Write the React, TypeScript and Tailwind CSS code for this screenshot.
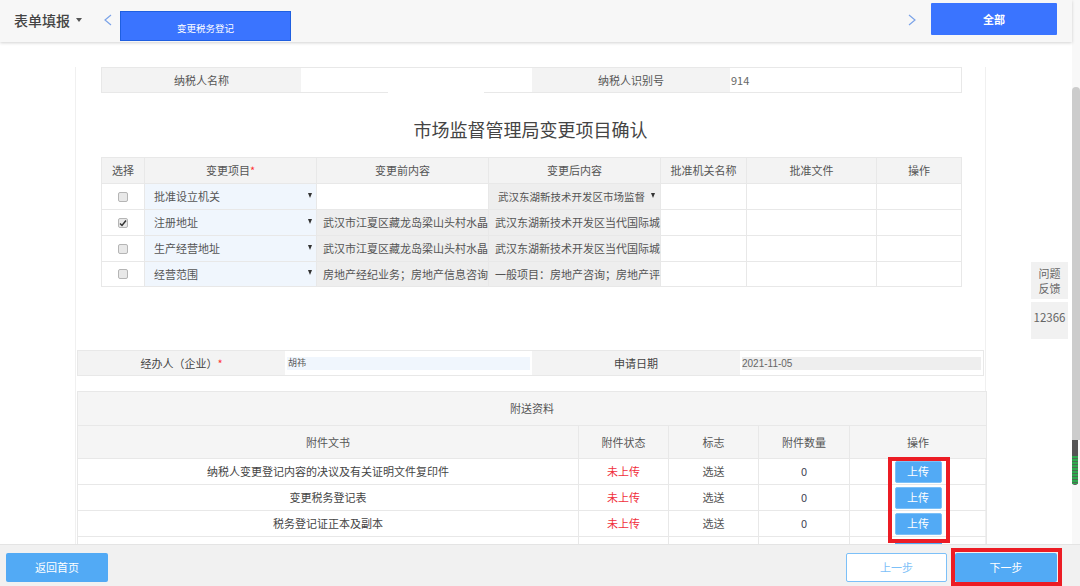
const changeRows = [
  { item: "批准设立机关", before: "", after: "武汉东湖新技术开发区市场监督", checked: false, editable: true },
  { item: "注册地址", before: "武汉市江夏区藏龙岛梁山头村水晶", after: "武汉东湖新技术开发区当代国际城", checked: true, editable: false },
  { item: "生产经营地址", before: "武汉市江夏区藏龙岛梁山头村水晶", after: "武汉东湖新技术开发区当代国际城", checked: false, editable: false },
  { item: "经营范围", before: "房地产经纪业务；房地产信息咨询", after: "一般项目：房地产咨询；房地产评", checked: false, editable: false },
];

const attachments = [
  "纳税人变更登记内容的决议及有关证明文件复印件",
  "变更税务登记表",
  "税务登记证正本及副本",
];

const th = "border border-[#e8e8e8] bg-[#f3f3f3] text-center font-normal text-[#555]";
const attachTh = "border border-[#e8e8e8] bg-[#f5f5f5] text-center font-normal text-[#555]";
const td = "border border-[#e8e8e8] text-center";

function Chevron({ right = false }: { right?: boolean }) {
  return (
    <svg width="8" height="12" viewBox="0 0 8 12" fill="none" stroke="#7ba3e8" strokeWidth="1.2">
      <path d={right ? "M1 1l6 5-6 5" : "M7 1L1 6l6 5"} />
    </svg>
  );
}

function Arrow() {
  return (
    <span className="-mt-[3px] h-0 w-0 shrink-0 border-x-[2.5px] border-t-[5px] border-x-transparent border-t-[#333]" />
  );
}

function Checkbox({ checked }: { checked: boolean }) {
  return (
    <span className="mx-auto flex h-[10px] w-[10px] items-center justify-center rounded-[2px] border border-[#b5b5b5] bg-[#e8e8e8]">
      {checked && (
        <svg width="8" height="8" viewBox="0 0 8 8" fill="none" stroke="#333" strokeWidth="1.5">
          <path d="M1 4.5l2 2 4-5" />
        </svg>
      )}
    </span>
  );
}

export default function App() {
  return (
    <div className="relative flex h-[586px] w-[1080px] flex-col overflow-hidden bg-white font-['Noto_Sans_CJK_SC','Liberation_Sans',sans-serif] text-[11px] text-[#555]">
      <div className="flex min-h-0 flex-1">
        <div className="flex min-w-0 flex-1 flex-col">
          <header className="relative z-10 flex h-[42px] shrink-0 items-center bg-[#f7f7f7] pr-[15px] pl-[14px] shadow-[0_1px_3px_rgba(0,0,0,0.18)]">
            <span className="-mt-[2px] text-[14px] font-medium text-[#444]">表单填报</span>
            <span className="-mt-[2px] ml-[6px] h-0 w-0 border-x-[3.5px] border-t-[4px] border-x-transparent border-t-[#555]" />
            <span className="-mt-[2px] mr-[8px] ml-[22px] flex">
              <Chevron />
            </span>
            <button className="mt-[11px] mb-px h-[30px] w-[171px] self-start border border-[#1f5fe0] bg-[#3a74ff] pt-[4px] text-[9.5px] text-white">
              变更税务登记
            </button>
            <span className="flex-1" />
            <span className="-mt-[2px] mr-[15px] flex">
              <Chevron right />
            </span>
            <button className="mt-[3px] h-[32px] w-[126px] self-start rounded-[1px] bg-[#3a74ff] text-[11px] font-bold text-white">
              全部
            </button>
          </header>

          <main className="min-h-0 flex-1 overflow-hidden">
            <div className="ml-[75px] h-full w-[911px] border-x border-[#f0f0f0] px-px">
              <div className="mx-[24px] mt-[25px] flex h-[26px] w-[861px] border border-[#e8e8e8]">
                <div className="flex w-[199px] items-center justify-center bg-[#f3f3f3]">纳税人名称</div>
                <div className="relative w-[231px]">
                  <span className="absolute -bottom-px left-[87px] h-[2px] w-[96px] bg-white" />
                </div>
                <div className="flex w-[198px] items-center justify-center bg-[#f3f3f3]">纳税人识别号</div>
                <div className="flex flex-1 items-center pl-px text-[#666]">914</div>
              </div>

              <h1 className="mt-[23px] h-[26px] text-center text-[18px] leading-[26px] font-normal text-[#444]">
                市场监督管理局变更项目确认
              </h1>

              <table className="mx-[24px] mt-[15px] w-[860px] table-fixed border-collapse">
                <colgroup>
                  <col className="w-[43px]" />
                  <col className="w-[172px]" />
                  <col className="w-[172px]" />
                  <col className="w-[172px]" />
                  <col className="w-[86px]" />
                  <col className="w-[130px]" />
                  <col className="w-[85px]" />
                </colgroup>
                <thead>
                  <tr className="h-[26px]">
                    <th className={th}>选择</th>
                    <th className={th}>
                      变更项目<span className="text-[#f33]">*</span>
                    </th>
                    <th className={th}>变更前内容</th>
                    <th className={th}>变更后内容</th>
                    <th className={th}>批准机关名称</th>
                    <th className={th}>批准文件</th>
                    <th className={th}>操作</th>
                  </tr>
                </thead>
                <tbody>
                  {changeRows.map((row, i) => (
                    <tr key={row.item} className={i === 3 ? "h-[25px]" : "h-[26px]"}>
                      <td className={td}>
                        <Checkbox checked={row.checked} />
                      </td>
                      <td className="border border-[#e8e8e8] bg-[#f0f6fd] pr-[4px] pl-[9px]">
                        <div className="flex items-center justify-between">
                          <span>{row.item}</span>
                          <Arrow />
                        </div>
                      </td>
                      <td className={`border border-[#e8e8e8] pl-[6px] ${row.before ? "bg-[#eeeeee]" : "bg-white"}`}>
                        {row.before}
                      </td>
                      <td className="border border-[#e8e8e8] bg-[#eeeeee] pl-[6px]">
                        {row.editable ? (
                          <div className="flex items-center justify-between pr-[5px] pl-[3px]">
                            <span className="whitespace-nowrap text-[10.5px]">{row.after}</span>
                            <Arrow />
                          </div>
                        ) : (
                          row.after
                        )}
                      </td>
                      <td className={td} />
                      <td className={td} />
                      <td className={td} />
                    </tr>
                  ))}
                </tbody>
              </table>

              <div className="mt-[63px] flex h-[26px] border border-[#e8e8e8] text-[#444]">
                <div className="flex w-[207px] items-center justify-center bg-[#f3f3f3]">
                  经办人（企业）<span className="text-[#f33]">*</span>
                </div>
                <div className="flex w-[247px] items-center px-[2px]">
                  <div className="flex h-[13px] w-full items-center bg-[#f0f6fd] pl-px text-[9px] text-[#555]">胡祎</div>
                </div>
                <div className="flex w-[208px] items-center justify-center bg-[#f3f3f3]">申请日期</div>
                <div className="flex flex-1 items-center px-[2px]">
                  <div className="flex h-[13px] w-full items-center bg-[#eeeeee] font-['Liberation_Sans',sans-serif] text-[10px] text-[#666]">
                    2021-11-05
                  </div>
                </div>
              </div>

              <div className="relative mt-[15px]">
                <table className="w-[909px] table-fixed border-collapse">
                  <colgroup>
                    <col className="w-[501px]" />
                    <col className="w-[90px]" />
                    <col className="w-[90px]" />
                    <col className="w-[91px]" />
                    <col className="w-[137px]" />
                  </colgroup>
                  <thead>
                    <tr className="h-[34px]">
                      <th colSpan={5} className={attachTh}>
                        附送资料
                      </th>
                    </tr>
                    <tr className="h-[33px]">
                      <th className={attachTh}>附件文书</th>
                      <th className={attachTh}>附件状态</th>
                      <th className={attachTh}>标志</th>
                      <th className={attachTh}>附件数量</th>
                      <th className={attachTh}>操作</th>
                    </tr>
                  </thead>
                  <tbody>
                    {attachments.map((name) => (
                      <tr key={name} className="h-[26px]">
                        <td className={`${td} text-[#444]`}>{name}</td>
                        <td className={`${td} text-[#f0303c]`}>未上传</td>
                        <td className={td}>选送</td>
                        <td className={`${td} text-[#445]`}>0</td>
                        <td className={td}>
                          <button className="mx-auto block h-[22px] w-[47px] rounded-[2px] border border-[#7cc0f8] bg-[#52aaf5] text-[11px] text-white">
                            上传
                          </button>
                        </td>
                      </tr>
                    ))}
                    <tr className="h-[26px]">
                      <td className={td} />
                      <td className={td} />
                      <td className={td} />
                      <td className={td} />
                      <td className={`${td} align-top pt-[2px]`}>
                        <div className="mx-auto h-[22px] w-[47px] rounded-[2px] bg-[#52aaf5]" />
                      </td>
                    </tr>
                  </tbody>
                </table>
                <div className="absolute top-[66px] left-[811px] h-[86px] w-[62px] border-[4px] border-[#ec1c24]" />
              </div>
            </div>
          </main>
        </div>

        <aside className="flex w-[8px] shrink-0 flex-col bg-[#f8f8f8] pt-[87px]">
          <div className="h-[353px] rounded-t-[4px] bg-[#cccccc]" />
          <div className="flex h-[45px] w-[6px] flex-col justify-end rounded-b-[3px] bg-[#555555] pb-px">
            <div className="h-[28px] bg-[repeating-linear-gradient(to_bottom,#2fa84f_0,#2fa84f_2px,#4b6b52_2px,#4b6b52_3px)]" />
          </div>
        </aside>
      </div>

      <footer className="flex h-[42px] shrink-0 items-start border-t border-[#e4e4e4] bg-[#f1f1f1] pt-[8px] pr-[23px] pl-[6px]">
        <button className="h-[29px] w-[102px] rounded-[2px] bg-[#52aaf5] text-[11px] text-white">返回首页</button>
        <span className="flex-1" />
        <button className="h-[29px] w-[101px] rounded-[2px] border border-[#7cc0f8] bg-white text-[11px] text-[#7cc0f8]">
          上一步
        </button>
        <div className="relative ml-[8px]">
          <button className="h-[29px] w-[102px] rounded-[2px] bg-[#52aaf5] text-[11px] text-white">下一步</button>
          <div className="absolute -top-[5px] -left-[4px] h-[38px] w-[111px] border-[4px] border-[#ec1c24]" />
        </div>
      </footer>

      <div className="absolute top-[262px] left-[1031px] flex w-[37px] flex-col gap-[3px] text-[#666]">
        <div className="flex h-[37px] items-center justify-center bg-[#f1f1f1] text-center leading-[15px]">
          问题
          <br />
          反馈
        </div>
        <div className="h-[37px] bg-[#f1f1f1] pt-[7px] text-center text-[11.5px]">12366</div>
      </div>
    </div>
  );
}
